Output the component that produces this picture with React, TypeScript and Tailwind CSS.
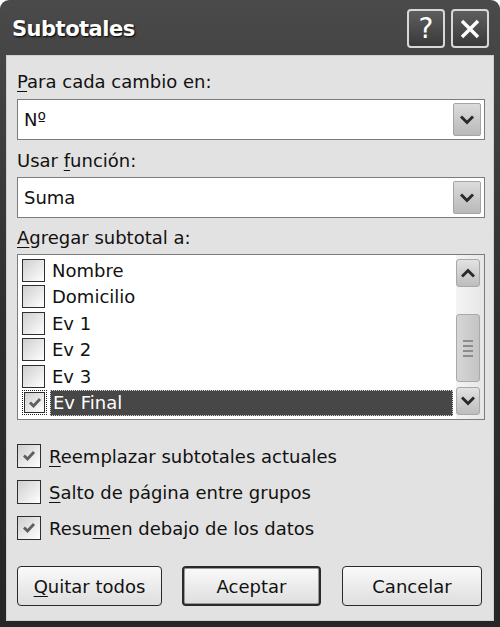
import React from 'react'

const font = { fontFamily: '"DejaVu Sans", Verdana, sans-serif' }

function Chevron({ up = false }: { up?: boolean }) {
  return (
    <svg width="14" height="10" viewBox="0 0 14 10" className={up ? 'rotate-180' : ''}>
      <path d="M2 2.5 L7 7.5 L12 2.5" fill="none" stroke="#2a2a2a" strokeWidth="3" strokeLinecap="square" />
    </svg>
  )
}

function Check() {
  return (
    <svg width="16" height="14" viewBox="0 0 16 14">
      <path d="M3 6.5 L6.5 10 L13 3" fill="none" stroke="#5e5e5e" strokeWidth="2.8" />
    </svg>
  )
}

function Box({ checked = false, size = 'w-[24px] h-[24px]' }: { checked?: boolean; size?: string }) {
  return (
    <span
      className={`${size} shrink-0 flex items-center justify-center border border-[#2e2e2e] bg-gradient-to-br from-[#cfcfcf] to-white`}
    >
      {checked && <Check />}
    </span>
  )
}

function Combo({ value }: { value: string }) {
  return (
    <div className="h-[41px] flex items-center justify-between border border-[#7c7c7c] bg-white pl-[6px] pr-[3px]">
      <span className="text-[18px] text-[#111]">{value}</span>
      <span className="w-[28px] h-[33px] flex items-center justify-center rounded-[2px] border border-[#a5a5a5] bg-gradient-to-b from-[#dcdcdc] to-[#b9b9b9]">
        <Chevron />
      </span>
    </div>
  )
}

function U({ children }: { children: React.ReactNode }) {
  return <span className="underline underline-offset-[3px] decoration-1">{children}</span>
}

const items = ['Nombre', 'Domicilio', 'Ev 1', 'Ev 2', 'Ev 3']

function ScrollButton({ up = false }: { up?: boolean }) {
  return (
    <div className="h-[28px] flex items-center justify-center rounded-[3px] border border-[#a9a9a9] bg-gradient-to-b from-[#e2e2e2] to-[#bdbdbd]">
      <Chevron up={up} />
    </div>
  )
}

function Button({ children, isDefault = false }: { children: React.ReactNode; isDefault?: boolean }) {
  return (
    <button
      className={`h-[40px] rounded-[4px] bg-gradient-to-b from-[#fafafa] to-[#dedede] text-[18px] text-[#111] ${
        isDefault ? 'border-2 border-[#2a2a2a] shadow-[inset_0_0_0_1px_#9a9a9a]' : 'border border-[#2a2a2a]'
      }`}
    >
      {children}
    </button>
  )
}

export default function App() {
  return (
    <div className="w-[500px] h-[627px] bg-white" style={font}>
      <div className="h-full flex flex-col rounded-t-[9px] bg-gradient-to-b from-[#4a4a4a] via-[#2f2f2f] to-[#262626] px-[6px] pb-[6px]">
        <div className="h-[55px] flex items-center justify-between pl-[6px] pr-[5px]">
          <span className="mt-[4px] text-[21px] font-bold tracking-[-0.5px] text-white [text-shadow:1px_1px_2px_#000]">
            Subtotales
          </span>
          <div className="flex gap-[6px] mt-[2px]">
            <span className="w-[38px] h-[39px] flex items-center justify-center rounded-[4px] border-2 border-[#d8d8d8] bg-gradient-to-b from-[#5e5e5e] to-[#3a3a3a] text-[28px] text-white leading-none">
              ?
            </span>
            <span className="w-[38px] h-[39px] flex items-center justify-center rounded-[4px] border-2 border-[#d8d8d8] bg-gradient-to-b from-[#5e5e5e] to-[#3a3a3a]">
              <svg width="22" height="22" viewBox="0 0 22 22">
                <path d="M3 3 L19 19 M19 3 L3 19" stroke="white" strokeWidth="3.4" />
              </svg>
            </span>
          </div>
        </div>

        <div className="flex-1 flex flex-col border border-[#cfcfcf] bg-[#e2e2e2] pt-[15px] pl-[10px] pr-[8px] text-[18px] text-[#111]">
          <div className="h-[22px] leading-[22px]">
            <U>P</U>ara cada cambio en:
          </div>
          <div className="mt-[6px]">
            <Combo value="Nº" />
          </div>
          <div className="mt-[10px] h-[22px] leading-[22px]">
            Usar <U>f</U>unción:
          </div>
          <div className="mt-[5px]">
            <Combo value="Suma" />
          </div>
          <div className="mt-[9px] h-[22px] leading-[22px]">
            <U>A</U>gregar subtotal a:
          </div>

          <div className="mt-[5px] h-[166px] flex border border-[#7c7c7c] bg-white">
            <div className="flex-1 flex flex-col pt-[2px] pl-[4px] pr-[3px]">
              {items.map((name) => (
                <div key={name} className="h-[26.5px] flex items-center gap-[7px]">
                  <Box size="w-[23px] h-[23px]" />
                  <span>{name}</span>
                </div>
              ))}
              <div className="h-[26.5px] flex items-center gap-[3px]">
                <span className="p-[1px] border border-dotted border-[#222]">
                  <Box checked size="w-[21px] h-[21px]" />
                </span>
                <span className="flex-1 h-full flex items-center pl-[2px] bg-[#474747] text-white border border-dotted border-[#cfcfcf]">
                  Ev Final
                </span>
              </div>
            </div>
            <div className="w-[28px] flex flex-col py-[4px] pr-[4px] bg-gradient-to-r from-[#f4f4f4] to-[#e6e6e6]">
              <ScrollButton up />
              <div className="flex-1 flex flex-col pt-[27px] pb-[5px]">
                <div className="flex-1 flex flex-col items-center justify-center gap-[3px] rounded-[3px] border border-[#a9a9a9] bg-gradient-to-r from-[#d6d6d6] to-[#c4c4c4]">
                  <span className="w-[10px] h-[2px] bg-[#8c8c8c]" />
                  <span className="w-[10px] h-[2px] bg-[#8c8c8c]" />
                  <span className="w-[10px] h-[2px] bg-[#8c8c8c]" />
                  <span className="w-[10px] h-[2px] bg-[#8c8c8c]" />
                </div>
              </div>
              <ScrollButton />
            </div>
          </div>

          <div className="mt-[24px] flex flex-col gap-[12px]">
            <div className="h-[24px] flex items-center gap-[8px]">
              <Box checked />
              <span>
                <U>R</U>eemplazar subtotales actuales
              </span>
            </div>
            <div className="h-[24px] flex items-center gap-[8px]">
              <Box />
              <span>
                <U>S</U>alto de página entre grupos
              </span>
            </div>
            <div className="h-[24px] flex items-center gap-[8px]">
              <Box checked />
              <span>
                Resu<U>m</U>en debajo de los datos
              </span>
            </div>
          </div>

          <div className="mt-[26px] flex pr-[3px]">
            <div className="w-[145px] flex flex-col">
              <Button>
                <U>Q</U>uitar todos
              </Button>
            </div>
            <div className="ml-[20px] w-[139px] flex flex-col">
              <Button isDefault>Aceptar</Button>
            </div>
            <div className="ml-auto w-[140px] flex flex-col">
              <Button>Cancelar</Button>
            </div>
          </div>
        </div>
      </div>
    </div>
  )
}
